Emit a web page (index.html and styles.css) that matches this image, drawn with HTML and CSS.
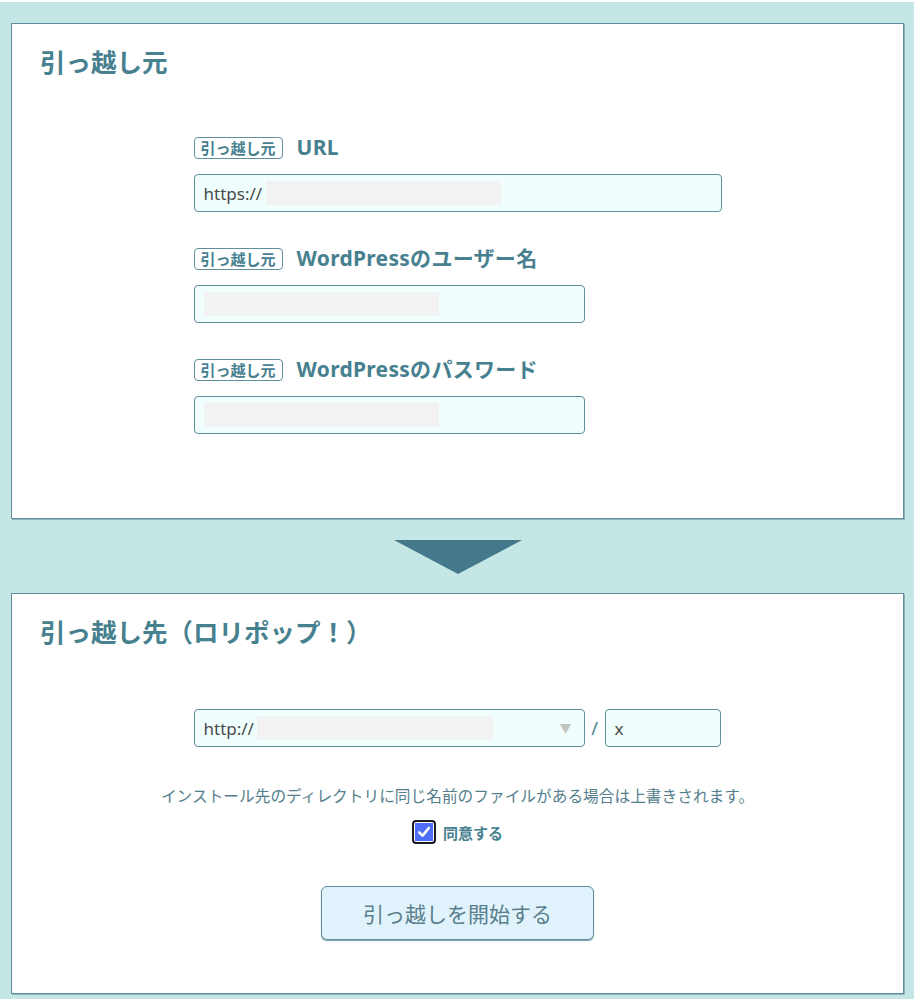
FILE: index.html
```html
<!DOCTYPE html>
<html lang="ja">
<head>
<meta charset="utf-8">
<title>引っ越し</title>
<link rel="stylesheet" href="styles.css">
</head>
<body>
<div class="wrap">
  <section class="panel panel-src">
    <h2 class="title">引っ越し元</h2>
    <div class="form">
      <div class="field">
        <div class="label-row"><span class="badge">引っ越し元</span><span class="label">URL</span></div>
        <div class="input input-wide"><span class="val">https://</span><span class="mask mask-url"></span></div>
      </div>
      <div class="field">
        <div class="label-row"><span class="badge">引っ越し元</span><span class="label">WordPressのユーザー名</span></div>
        <div class="input input-mid"><span class="mask mask-full"></span></div>
      </div>
      <div class="field">
        <div class="label-row"><span class="badge">引っ越し元</span><span class="label">WordPressのパスワード</span></div>
        <div class="input input-mid"><span class="mask mask-full"></span></div>
      </div>
    </div>
  </section>
  <div class="arrow"></div>
  <section class="panel panel-dst">
    <h2 class="title">引っ越し先（ロリポップ！）</h2>
    <div class="dest">
      <div class="dest-row">
        <div class="input input-mid select"><span class="val">http://</span><span class="mask mask-http"></span><span class="caret">▼</span></div>
        <span class="slash">/</span>
        <div class="input input-dir"><span class="val">x</span></div>
      </div>
      <p class="note">インストール先のディレクトリに同じ名前のファイルがある場合は上書きされます。</p>
      <label class="agree"><span class="check"><svg width="16" height="16" viewBox="0 0 16 16"><path d="M3.2 8.4 L6.6 11.6 L12.8 4" fill="none" stroke="#fff" stroke-width="2.6" stroke-linecap="round" stroke-linejoin="round"/></svg></span><span class="agree-text">同意する</span></label>
      <button class="start" type="button">引っ越しを開始する</button>
    </div>
  </section>
</div>
</body>
</html>
```
FILE: styles.css
```css
* { box-sizing: border-box; }
html, body { margin: 0; padding: 0; background: #fff; }
body {
  font-family: "Noto Sans", "Noto Sans CJK JP", sans-serif;
  color: #47808f;
}
.wrap {
  width: 914px;
  margin-top: 2px;
  height: 997px;
  background: #c4e6e5;
  padding: 21px 10px 5px 11px;
  display: flex;
  flex-direction: column;
}
.panel {
  background: #fff;
  border: 1px solid #5f8f9c;
  box-shadow: 1px 1px 0 #8fb3bd;
  padding: 23px 28px 0 28px;
}
.panel-src { height: 496px; }
.panel-dst { flex: 1; }
.title {
  margin: 0;
  font-size: 25.5px;
  line-height: 30px;
  font-weight: 700;
  color: #47808f;
}
.form {
  width: 528px;
  margin: 60px auto 0;
  display: flex;
  flex-direction: column;
  gap: 36px;
}
.field { display: flex; flex-direction: column; gap: 15px; }
.label-row { display: flex; align-items: center; height: 22px; }
.badge {
  display: inline-block;
  height: 22px;
  line-height: 20px;
  padding: 0 6px;
  border: 1px solid #5f8f9c;
  border-radius: 4px;
  font-size: 15px;
  font-weight: 700;
  color: #47808f;
}
.label {
  margin-left: 14px;
  font-size: 21px;
  letter-spacing: 0.3px;
  font-weight: 700;
  color: #47808f;
  line-height: 22px;
  position: relative;
  top: -1px;
}
.input {
  height: 38px;
  border: 1px solid #5f8f9c;
  border-radius: 4px;
  background: #f0fefe;
  display: flex;
  align-items: center;
  padding: 0 9px;
  font-size: 17px;
  color: #4a4a4a;
  position: relative;
}
.input-wide { width: 528px; }
.input-mid { width: 391px; }
.input-dir { width: 116px; padding-left: 9px; }
.val { white-space: nowrap; }
.mask {
  display: inline-block;
  height: 24px;
  background: #f2f2f2;
}
.mask-url { width: 235px; margin-left: 4px; }
.mask-full { width: 235px; }
.mask-http { width: 236px; margin-left: 3px; }
.caret {
  position: absolute;
  right: 12px;
  top: 9px;
  font-size: 12px;
  color: #c4c4c4;
}
.arrow {
  width: 0;
  height: 0;
  margin: 21px auto 19px;
  border-left: 64px solid transparent;
  border-right: 64px solid transparent;
  border-top: 34px solid #43798a;
}
.dest {
  margin-top: 62px;
  display: flex;
  flex-direction: column;
  align-items: center;
}
.dest-row { display: flex; align-items: center; width: 528px; }
.slash { width: 20px; text-align: center; font-size: 18px; color: #47808f; }
.note {
  margin: 38px 0 0;
  font-size: 15.7px;
  line-height: 22px;
  color: #557e8c;
  font-family: "Noto Sans CJK JP", sans-serif;
}
.agree {
  margin-top: 13px;
  display: flex;
  align-items: center;
  height: 24px;
}
.check {
  width: 24px;
  height: 24px;
  border: 2.5px solid #1c1c1c;
  border-radius: 4px;
  background: #4d6ef5;
  box-shadow: inset 0 0 0 1px #fff;
  display: flex;
  align-items: center;
  justify-content: center;
  margin-right: 7px;
}
.agree-text { font-size: 15px; font-weight: 700; color: #47808f; }
.start {
  margin-top: 42px;
  width: 273px;
  height: 54px;
  background: #e0f3fc;
  border: 1px solid #5f8f9c;
  border-radius: 6px;
  box-shadow: 0 1px 1px #7a9aa5;
  font-family: "Noto Sans CJK JP", sans-serif;
  font-size: 21px;
  color: #5a7f8c;
  cursor: pointer;
}
```
